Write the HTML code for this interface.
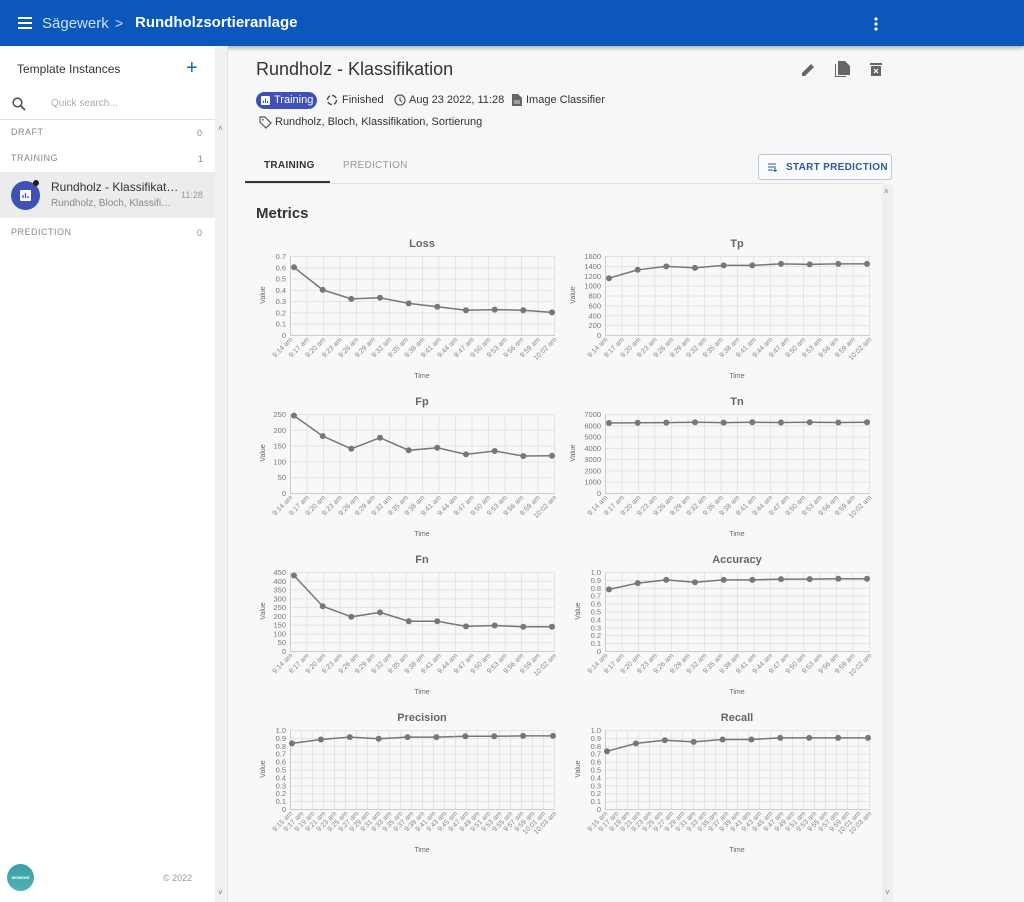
<!DOCTYPE html>
<html><head><meta charset="utf-8"><style>
*{box-sizing:border-box;margin:0;padding:0}
body{width:1024px;height:902px;overflow:hidden;font-family:"Liberation Sans",sans-serif;background:#f7f7f7;position:relative;color:#333}
.abs{position:absolute}
.top{left:0;top:0;width:1024px;height:46px;background:#0b57bb;box-shadow:0 2px 4px rgba(0,0,0,.3)}
.side{left:0;top:46px;width:215px;height:856px;background:#fff}
.sbar{left:215px;top:46px;width:13px;height:856px;background:#f1f1f1;border-right:1px solid #e3e3e3}
.sec{font-size:9px;letter-spacing:.5px;color:#888}
.cnt{font-size:9px;color:#888}
svg text{font-family:"Liberation Sans",sans-serif}
.ch{position:absolute;width:310px;height:150px}
.ch .yl text{font-size:7.5px;fill:#777;text-anchor:end}
.ch .xl text{font-size:7px;fill:#888;text-anchor:end}
.ch .t{font-size:11px;font-weight:bold;fill:#666;text-anchor:middle}
.ch .ax{font-size:7px;fill:#666;text-anchor:middle}
</style></head><body>
<div class="abs top">
 <svg class="abs" style="left:18px;top:17px" width="14" height="12"><path d="M0 1H14M0 6H14M0 11H14" stroke="#fff" stroke-width="2"/></svg>
 <div class="abs" style="left:42px;top:15px;font-size:15px;color:#cfe0f7">Sägewerk</div>
 <div class="abs" style="left:115px;top:15px;font-size:14px;color:#cfe0f7">&gt;</div>
 <div class="abs" style="left:135px;top:14px;font-size:15px;color:#fff;font-weight:bold">Rundholzsortieranlage</div>
 <svg class="abs" style="left:874px;top:17px" width="4" height="14"><circle cx="2" cy="2" r="1.6" fill="#fff"/><circle cx="2" cy="7" r="1.6" fill="#fff"/><circle cx="2" cy="12" r="1.6" fill="#fff"/></svg>
</div>
<div class="abs side">
 <div class="abs" style="left:17px;top:16px;font-size:12px;color:#333">Template Instances</div>
 <div class="abs" style="left:186px;top:11px;font-size:20px;color:#1565c0">+</div>
 <svg class="abs" style="left:12px;top:51px" width="14" height="14"><circle cx="5.5" cy="5.5" r="4.3" fill="none" stroke="#555" stroke-width="1.6"/><path d="M8.7 8.7L13 13" stroke="#555" stroke-width="1.8"/></svg>
 <div class="abs" style="left:51px;top:52px;font-size:10px;color:#aaa">Quick search...</div>
 <div class="abs" style="left:0;top:73px;width:215px;height:1px;background:#e0e0e0"></div>
 <div class="abs sec" style="left:11px;top:81px">DRAFT</div><div class="abs cnt" style="left:197px;top:82px">0</div>
 <div class="abs sec" style="left:11px;top:107px">TRAINING</div><div class="abs cnt" style="left:198px;top:108px">1</div>
 <div class="abs" style="left:0;top:126px;width:215px;height:46px;background:#ececec"></div>
 <div class="abs" style="left:11px;top:135px;width:29px;height:29px;border-radius:50%;background:#3f51b5"></div>
 <div class="abs" style="left:33px;top:134px;width:6px;height:6px;border-radius:50%;background:#222"></div>
 <svg class="abs" style="left:20px;top:144px" width="11" height="11"><rect width="11" height="11" rx="1" fill="#fff"/><path d="M3 8V5M5.5 8V3M8 8V6" stroke="#3f51b5" stroke-width="1.3"/></svg>
 <div class="abs" style="left:51px;top:134px;font-size:12px;color:#333">Rundholz - Klassifikat…</div>
 <div class="abs" style="left:51px;top:152px;font-size:10px;color:#888">Rundholz, Bloch, Klassifi…</div>
 <div class="abs" style="left:181px;top:144px;font-size:9px;color:#999">11:28</div>
 <div class="abs sec" style="left:11px;top:181px">PREDICTION</div><div class="abs cnt" style="left:197px;top:182px">0</div>
 <div class="abs" style="left:7px;top:818px;width:27px;height:27px;border-radius:50%;background:linear-gradient(#3a9ea5,#4fb1b2);color:#fff;font-size:4px;text-align:center;line-height:27px;font-weight:bold">SIEMENS</div>
 <div class="abs" style="left:163px;top:827px;font-size:9px;color:#999">© 2022</div>
</div>
<div class="abs sbar"><div class="abs" style="left:3px;top:78px;font-size:8px;color:#777">˄</div><div class="abs" style="left:3px;top:842px;font-size:8px;color:#777">˅</div></div>

<div class="abs" style="left:256px;top:59px;font-size:18px;color:#333">Rundholz - Klassifikation</div>
<svg class="abs" style="left:801px;top:62px" width="15" height="15"><path d="M1 14V11L10 2L13 5L4 14Z" fill="#666"/></svg>
<svg class="abs" style="left:835px;top:61px" width="16" height="17"><path d="M1 3V15H11V16H0V3Z" fill="#666"/><path d="M3 0H10L15 5V14H3Z" fill="#666"/></svg>
<svg class="abs" style="left:870px;top:62px" width="12" height="14"><rect x="0" y="1" width="12" height="2" fill="#666"/><rect x="1" y="4" width="10" height="10" fill="#666"/><path d="M4 7L8 11M8 7L4 11" stroke="#fff" stroke-width="1.2"/></svg>

<div class="abs" style="left:256px;top:92px;width:61px;height:17px;border-radius:9px;background:#3f51b5"></div>
<svg class="abs" style="left:261px;top:96px" width="9" height="9"><rect width="9" height="9" rx="1" fill="#fff"/><path d="M2.5 7V4.5M4.5 7V2.5M6.5 7V5" stroke="#3f51b5" stroke-width="1.1"/></svg>
<div class="abs" style="left:274px;top:94px;font-size:11px;color:#fff">Training</div>
<svg class="abs" style="left:326px;top:94px" width="12" height="12"><circle cx="6" cy="6" r="4.5" fill="none" stroke="#555" stroke-width="1.5" stroke-dasharray="5 2"/></svg>
<div class="abs" style="left:342px;top:94px;font-size:11px;color:#333">Finished</div>
<svg class="abs" style="left:394px;top:94px" width="12" height="12"><circle cx="6" cy="6" r="5" fill="none" stroke="#555" stroke-width="1.2"/><path d="M6 3V6.5L8 8" stroke="#555" stroke-width="1.1" fill="none"/></svg>
<div class="abs" style="left:409px;top:94px;font-size:11px;color:#333">Aug 23 2022, 11:28</div>
<svg class="abs" style="left:512px;top:94px" width="10" height="12"><path d="M0 0H6L10 4V12H0Z" fill="#666"/><path d="M2 7H8M2 9H8" stroke="#fff" stroke-width=".8"/></svg>
<div class="abs" style="left:526px;top:94px;font-size:11px;color:#333">Image Classifier</div>
<svg class="abs" style="left:259px;top:116px" width="13" height="13"><path d="M1 1H6L12 7L7 12L1 6Z" fill="none" stroke="#555" stroke-width="1.2"/><circle cx="3.8" cy="3.8" r=".9" fill="#555"/></svg>
<div class="abs" style="left:275px;top:116px;font-size:11px;color:#333">Rundholz, Bloch, Klassifikation, Sortierung</div>

<div class="abs" style="left:264px;top:160px;font-size:10px;font-weight:bold;color:#333;letter-spacing:.3px">TRAINING</div>
<div class="abs" style="left:343px;top:160px;font-size:10px;color:#999;letter-spacing:.3px">PREDICTION</div>
<div class="abs" style="left:245px;top:183px;width:637px;height:1px;background:#e0e0e0"></div>
<div class="abs" style="left:245px;top:181px;width:85px;height:2px;background:#333"></div>
<div class="abs" style="left:758px;top:154px;width:134px;height:26px;border:1px solid #b8c8dc;border-radius:3px;background:#f9fbfd"></div>
<svg class="abs" style="left:768px;top:163px" width="10" height="9"><path d="M0 1H8M0 4H8M0 7H5M7 5V9M5.5 7.5H9" stroke="#1e5aa8" stroke-width="1.1"/></svg>
<div class="abs" style="left:786px;top:162px;font-size:10px;font-weight:bold;color:#2b5c99;letter-spacing:.3px">START PREDICTION</div>

<div class="abs" style="left:245px;top:185px;width:637px;height:717px;background:#f8f8f8"></div>
<div class="abs" style="left:882px;top:185px;width:11px;height:717px;background:#efefef"><div class="abs" style="left:2px;top:2px;font-size:8px;color:#777">˄</div></div>
<div class="abs" style="left:256px;top:205px;font-size:15px;font-weight:bold;color:#333">Metrics</div>

<svg width="0" height="0" style="position:absolute"><defs>
<pattern id="v17" x="35" y="0" width="16.5" height="10" patternUnits="userSpaceOnUse"><path d="M0.5 0V10" stroke="#e4e4e4"/></pattern>
<pattern id="v25" x="35" y="0" width="11" height="10" patternUnits="userSpaceOnUse"><path d="M0.5 0V10" stroke="#e4e4e4"/></pattern>
<pattern id="h5" x="0" y="23" width="10" height="15.8" patternUnits="userSpaceOnUse"><path d="M0 0.5H10" stroke="#e4e4e4"/></pattern>
<pattern id="h7" x="0" y="23" width="10" height="11.286" patternUnits="userSpaceOnUse"><path d="M0 0.5H10" stroke="#e4e4e4"/></pattern>
<pattern id="h8" x="0" y="23" width="10" height="9.875" patternUnits="userSpaceOnUse"><path d="M0 0.5H10" stroke="#e4e4e4"/></pattern>
<pattern id="h9" x="0" y="23" width="10" height="8.778" patternUnits="userSpaceOnUse"><path d="M0 0.5H10" stroke="#e4e4e4"/></pattern>
<pattern id="h10" x="0" y="23" width="10" height="7.9" patternUnits="userSpaceOnUse"><path d="M0 0.5H10" stroke="#e4e4e4"/></pattern>
<marker id="dot" markerWidth="8" markerHeight="8" refX="4" refY="4" markerUnits="userSpaceOnUse"><circle cx="4" cy="4" r="3" fill="#777"/></marker>
</defs></svg>

<!-- Loss -->
<svg class="ch" style="left:255px;top:233px"><text class="t" x="167" y="14">Loss</text>
<rect x="35" y="23" width="265" height="80" fill="url(#v17)"/><rect x="35" y="23" width="265" height="80" fill="url(#h7)"/><path d="M35.5 23V102.5H300" stroke="#ccc" fill="none"/>
<g class="yl"><text x="31" y="26">0.7</text><text x="31" y="37.3">0.6</text><text x="31" y="48.6">0.5</text><text x="31" y="59.9">0.4</text><text x="31" y="71.1">0.3</text><text x="31" y="82.4">0.2</text><text x="31" y="93.7">0.1</text><text x="31" y="105">0</text></g>
<g class="xl"><text transform="translate(38,107)rotate(-45)">9:14 am</text><text transform="translate(54.5,107)rotate(-45)">9:17 am</text><text transform="translate(71,107)rotate(-45)">9:20 am</text><text transform="translate(87.5,107)rotate(-45)">9:23 am</text><text transform="translate(104,107)rotate(-45)">9:26 am</text><text transform="translate(120.5,107)rotate(-45)">9:29 am</text><text transform="translate(137,107)rotate(-45)">9:32 am</text><text transform="translate(153.5,107)rotate(-45)">9:35 am</text><text transform="translate(170,107)rotate(-45)">9:38 am</text><text transform="translate(186.5,107)rotate(-45)">9:41 am</text><text transform="translate(203,107)rotate(-45)">9:44 am</text><text transform="translate(219.5,107)rotate(-45)">9:47 am</text><text transform="translate(236,107)rotate(-45)">9:50 am</text><text transform="translate(252.5,107)rotate(-45)">9:53 am</text><text transform="translate(269,107)rotate(-45)">9:56 am</text><text transform="translate(285.5,107)rotate(-45)">9:59 am</text><text transform="translate(302,107)rotate(-45)">10:02 am</text></g>
<text class="ax" transform="translate(10,62)rotate(-90)">Value</text><text class="ax" x="167" y="145">Time</text>
<polyline points="39,34.3 67.7,56.9 96.3,65.9 125,64.8 153.7,70.4 182.3,73.8 211,77.2 239.7,76.6 268.3,77.2 297,79.4" fill="none" stroke="#777" stroke-width="1.5" marker-start="url(#dot)" marker-mid="url(#dot)" marker-end="url(#dot)"/></svg>

<!-- Tp -->
<svg class="ch" style="left:570px;top:233px"><text class="t" x="167" y="14">Tp</text>
<rect x="35" y="23" width="265" height="80" fill="url(#v17)"/><rect x="35" y="23" width="265" height="80" fill="url(#h8)"/><path d="M35.5 23V102.5H300" stroke="#ccc" fill="none"/>
<g class="yl"><text x="31" y="26">1600</text><text x="31" y="35.9">1400</text><text x="31" y="45.8">1200</text><text x="31" y="55.6">1000</text><text x="31" y="65.5">800</text><text x="31" y="75.4">600</text><text x="31" y="85.3">400</text><text x="31" y="95.1">200</text><text x="31" y="105">0</text></g>
<g class="xl"><text transform="translate(38,107)rotate(-45)">9:14 am</text><text transform="translate(54.5,107)rotate(-45)">9:17 am</text><text transform="translate(71,107)rotate(-45)">9:20 am</text><text transform="translate(87.5,107)rotate(-45)">9:23 am</text><text transform="translate(104,107)rotate(-45)">9:26 am</text><text transform="translate(120.5,107)rotate(-45)">9:29 am</text><text transform="translate(137,107)rotate(-45)">9:32 am</text><text transform="translate(153.5,107)rotate(-45)">9:35 am</text><text transform="translate(170,107)rotate(-45)">9:38 am</text><text transform="translate(186.5,107)rotate(-45)">9:41 am</text><text transform="translate(203,107)rotate(-45)">9:44 am</text><text transform="translate(219.5,107)rotate(-45)">9:47 am</text><text transform="translate(236,107)rotate(-45)">9:50 am</text><text transform="translate(252.5,107)rotate(-45)">9:53 am</text><text transform="translate(269,107)rotate(-45)">9:56 am</text><text transform="translate(285.5,107)rotate(-45)">9:59 am</text><text transform="translate(302,107)rotate(-45)">10:02 am</text></g>
<text class="ax" transform="translate(5,62)rotate(-90)">Value</text><text class="ax" x="167" y="145">Time</text>
<polyline points="39,45.2 67.7,36.8 96.3,33.4 125,34.9 153.7,32.4 182.3,32.4 211,30.9 239.7,31.4 268.3,30.9 297,30.9" fill="none" stroke="#777" stroke-width="1.5" marker-start="url(#dot)" marker-mid="url(#dot)" marker-end="url(#dot)"/></svg>

<!-- Fp -->
<svg class="ch" style="left:255px;top:391px"><text class="t" x="167" y="14">Fp</text>
<rect x="35" y="23" width="265" height="80" fill="url(#v17)"/><rect x="35" y="23" width="265" height="80" fill="url(#h5)"/><path d="M35.5 23V102.5H300" stroke="#ccc" fill="none"/>
<g class="yl"><text x="31" y="26">250</text><text x="31" y="41.8">200</text><text x="31" y="57.6">150</text><text x="31" y="73.4">100</text><text x="31" y="89.2">50</text><text x="31" y="105">0</text></g>
<g class="xl"><text transform="translate(38,107)rotate(-45)">9:14 am</text><text transform="translate(54.5,107)rotate(-45)">9:17 am</text><text transform="translate(71,107)rotate(-45)">9:20 am</text><text transform="translate(87.5,107)rotate(-45)">9:23 am</text><text transform="translate(104,107)rotate(-45)">9:26 am</text><text transform="translate(120.5,107)rotate(-45)">9:29 am</text><text transform="translate(137,107)rotate(-45)">9:32 am</text><text transform="translate(153.5,107)rotate(-45)">9:35 am</text><text transform="translate(170,107)rotate(-45)">9:38 am</text><text transform="translate(186.5,107)rotate(-45)">9:41 am</text><text transform="translate(203,107)rotate(-45)">9:44 am</text><text transform="translate(219.5,107)rotate(-45)">9:47 am</text><text transform="translate(236,107)rotate(-45)">9:50 am</text><text transform="translate(252.5,107)rotate(-45)">9:53 am</text><text transform="translate(269,107)rotate(-45)">9:56 am</text><text transform="translate(285.5,107)rotate(-45)">9:59 am</text><text transform="translate(302,107)rotate(-45)">10:02 am</text></g>
<text class="ax" transform="translate(10,62)rotate(-90)">Value</text><text class="ax" x="167" y="145">Time</text>
<polyline points="39,24.6 67.7,45.1 96.3,57.8 125,46.7 153.7,59.3 182.3,56.8 211,63.4 239.7,60 268.3,65 297,64.7" fill="none" stroke="#777" stroke-width="1.5" marker-start="url(#dot)" marker-mid="url(#dot)" marker-end="url(#dot)"/></svg>

<!-- Tn -->
<svg class="ch" style="left:570px;top:391px"><text class="t" x="167" y="14">Tn</text>
<rect x="35" y="23" width="265" height="80" fill="url(#v17)"/><rect x="35" y="23" width="265" height="80" fill="url(#h7)"/><path d="M35.5 23V102.5H300" stroke="#ccc" fill="none"/>
<g class="yl"><text x="31" y="26">7000</text><text x="31" y="37.3">6000</text><text x="31" y="48.6">5000</text><text x="31" y="59.9">4000</text><text x="31" y="71.1">3000</text><text x="31" y="82.4">2000</text><text x="31" y="93.7">1000</text><text x="31" y="105">0</text></g>
<g class="xl"><text transform="translate(38,107)rotate(-45)">9:14 am</text><text transform="translate(54.5,107)rotate(-45)">9:17 am</text><text transform="translate(71,107)rotate(-45)">9:20 am</text><text transform="translate(87.5,107)rotate(-45)">9:23 am</text><text transform="translate(104,107)rotate(-45)">9:26 am</text><text transform="translate(120.5,107)rotate(-45)">9:29 am</text><text transform="translate(137,107)rotate(-45)">9:32 am</text><text transform="translate(153.5,107)rotate(-45)">9:35 am</text><text transform="translate(170,107)rotate(-45)">9:38 am</text><text transform="translate(186.5,107)rotate(-45)">9:41 am</text><text transform="translate(203,107)rotate(-45)">9:44 am</text><text transform="translate(219.5,107)rotate(-45)">9:47 am</text><text transform="translate(236,107)rotate(-45)">9:50 am</text><text transform="translate(252.5,107)rotate(-45)">9:53 am</text><text transform="translate(269,107)rotate(-45)">9:56 am</text><text transform="translate(285.5,107)rotate(-45)">9:59 am</text><text transform="translate(302,107)rotate(-45)">10:02 am</text></g>
<text class="ax" transform="translate(5,62)rotate(-90)">Value</text><text class="ax" x="167" y="145">Time</text>
<polyline points="39,32 67.7,31.8 96.3,31.6 125,31.3 153.7,31.6 182.3,31.3 211,31.5 239.7,31.3 268.3,31.5 297,31.3" fill="none" stroke="#777" stroke-width="1.5" marker-start="url(#dot)" marker-mid="url(#dot)" marker-end="url(#dot)"/></svg>

<!-- Fn -->
<svg class="ch" style="left:255px;top:549px"><text class="t" x="167" y="14">Fn</text>
<rect x="35" y="23" width="265" height="80" fill="url(#v17)"/><rect x="35" y="23" width="265" height="80" fill="url(#h9)"/><path d="M35.5 23V102.5H300" stroke="#ccc" fill="none"/>
<g class="yl"><text x="31" y="26">450</text><text x="31" y="34.8">400</text><text x="31" y="43.6">350</text><text x="31" y="52.3">300</text><text x="31" y="61.1">250</text><text x="31" y="69.9">200</text><text x="31" y="78.7">150</text><text x="31" y="87.4">100</text><text x="31" y="96.2">50</text><text x="31" y="105">0</text></g>
<g class="xl"><text transform="translate(38,107)rotate(-45)">9:14 am</text><text transform="translate(54.5,107)rotate(-45)">9:17 am</text><text transform="translate(71,107)rotate(-45)">9:20 am</text><text transform="translate(87.5,107)rotate(-45)">9:23 am</text><text transform="translate(104,107)rotate(-45)">9:26 am</text><text transform="translate(120.5,107)rotate(-45)">9:29 am</text><text transform="translate(137,107)rotate(-45)">9:32 am</text><text transform="translate(153.5,107)rotate(-45)">9:35 am</text><text transform="translate(170,107)rotate(-45)">9:38 am</text><text transform="translate(186.5,107)rotate(-45)">9:41 am</text><text transform="translate(203,107)rotate(-45)">9:44 am</text><text transform="translate(219.5,107)rotate(-45)">9:47 am</text><text transform="translate(236,107)rotate(-45)">9:50 am</text><text transform="translate(252.5,107)rotate(-45)">9:53 am</text><text transform="translate(269,107)rotate(-45)">9:56 am</text><text transform="translate(285.5,107)rotate(-45)">9:59 am</text><text transform="translate(302,107)rotate(-45)">10:02 am</text></g>
<text class="ax" transform="translate(10,62)rotate(-90)">Value</text><text class="ax" x="167" y="145">Time</text>
<polyline points="39,26.5 67.7,57.2 96.3,67.8 125,63.4 153.7,72.2 182.3,72.2 211,77.4 239.7,76.5 268.3,77.8 297,77.8" fill="none" stroke="#777" stroke-width="1.5" marker-start="url(#dot)" marker-mid="url(#dot)" marker-end="url(#dot)"/></svg>

<!-- Accuracy -->
<svg class="ch" style="left:570px;top:549px"><text class="t" x="167" y="14">Accuracy</text>
<rect x="35" y="23" width="265" height="80" fill="url(#v17)"/><rect x="35" y="23" width="265" height="80" fill="url(#h10)"/><path d="M35.5 23V102.5H300" stroke="#ccc" fill="none"/>
<g class="yl"><text x="31" y="26">1.0</text><text x="31" y="33.9">0.9</text><text x="31" y="41.8">0.8</text><text x="31" y="49.7">0.7</text><text x="31" y="57.6">0.6</text><text x="31" y="65.5">0.5</text><text x="31" y="73.4">0.4</text><text x="31" y="81.3">0.3</text><text x="31" y="89.2">0.2</text><text x="31" y="97.1">0.1</text><text x="31" y="105">0</text></g>
<g class="xl"><text transform="translate(38,107)rotate(-45)">9:14 am</text><text transform="translate(54.5,107)rotate(-45)">9:17 am</text><text transform="translate(71,107)rotate(-45)">9:20 am</text><text transform="translate(87.5,107)rotate(-45)">9:23 am</text><text transform="translate(104,107)rotate(-45)">9:26 am</text><text transform="translate(120.5,107)rotate(-45)">9:29 am</text><text transform="translate(137,107)rotate(-45)">9:32 am</text><text transform="translate(153.5,107)rotate(-45)">9:35 am</text><text transform="translate(170,107)rotate(-45)">9:38 am</text><text transform="translate(186.5,107)rotate(-45)">9:41 am</text><text transform="translate(203,107)rotate(-45)">9:44 am</text><text transform="translate(219.5,107)rotate(-45)">9:47 am</text><text transform="translate(236,107)rotate(-45)">9:50 am</text><text transform="translate(252.5,107)rotate(-45)">9:53 am</text><text transform="translate(269,107)rotate(-45)">9:56 am</text><text transform="translate(285.5,107)rotate(-45)">9:59 am</text><text transform="translate(302,107)rotate(-45)">10:02 am</text></g>
<text class="ax" transform="translate(10,62)rotate(-90)">Value</text><text class="ax" x="167" y="145">Time</text>
<polyline points="39,40.4 67.7,34.1 96.3,30.9 125,33.3 153.7,30.9 182.3,30.9 211,30.1 239.7,30.1 268.3,29.7 297,29.7" fill="none" stroke="#777" stroke-width="1.5" marker-start="url(#dot)" marker-mid="url(#dot)" marker-end="url(#dot)"/></svg>

<!-- Precision -->
<svg class="ch" style="left:255px;top:707px"><text class="t" x="167" y="14">Precision</text>
<rect x="35" y="23" width="265" height="80" fill="url(#v25)"/><rect x="35" y="23" width="265" height="80" fill="url(#h10)"/><path d="M35.5 23V102.5H300" stroke="#ccc" fill="none"/>
<g class="yl"><text x="31" y="26">1.0</text><text x="31" y="33.9">0.9</text><text x="31" y="41.8">0.8</text><text x="31" y="49.7">0.7</text><text x="31" y="57.6">0.6</text><text x="31" y="65.5">0.5</text><text x="31" y="73.4">0.4</text><text x="31" y="81.3">0.3</text><text x="31" y="89.2">0.2</text><text x="31" y="97.1">0.1</text><text x="31" y="105">0</text></g>
<g class="xl"><text transform="translate(38,107)rotate(-45)">9:15 am</text><text transform="translate(49,107)rotate(-45)">9:17 am</text><text transform="translate(60,107)rotate(-45)">9:19 am</text><text transform="translate(71,107)rotate(-45)">9:21 am</text><text transform="translate(82,107)rotate(-45)">9:23 am</text><text transform="translate(93,107)rotate(-45)">9:25 am</text><text transform="translate(104,107)rotate(-45)">9:27 am</text><text transform="translate(115,107)rotate(-45)">9:29 am</text><text transform="translate(126,107)rotate(-45)">9:31 am</text><text transform="translate(137,107)rotate(-45)">9:33 am</text><text transform="translate(148,107)rotate(-45)">9:35 am</text><text transform="translate(159,107)rotate(-45)">9:37 am</text><text transform="translate(170,107)rotate(-45)">9:39 am</text><text transform="translate(181,107)rotate(-45)">9:41 am</text><text transform="translate(192,107)rotate(-45)">9:43 am</text><text transform="translate(203,107)rotate(-45)">9:45 am</text><text transform="translate(214,107)rotate(-45)">9:47 am</text><text transform="translate(225,107)rotate(-45)">9:49 am</text><text transform="translate(236,107)rotate(-45)">9:51 am</text><text transform="translate(247,107)rotate(-45)">9:53 am</text><text transform="translate(258,107)rotate(-45)">9:55 am</text><text transform="translate(269,107)rotate(-45)">9:57 am</text><text transform="translate(280,107)rotate(-45)">9:59 am</text><text transform="translate(291,107)rotate(-45)">10:01 am</text><text transform="translate(302,107)rotate(-45)">10:03 am</text></g>
<text class="ax" transform="translate(10,62)rotate(-90)">Value</text><text class="ax" x="167" y="145">Time</text>
<polyline points="37,36.4 65.9,32.5 94.8,30.1 123.7,31.7 152.6,30.1 181.4,30.1 210.3,29.3 239.2,29.3 268.1,28.9 298,28.9" fill="none" stroke="#777" stroke-width="1.5" marker-start="url(#dot)" marker-mid="url(#dot)" marker-end="url(#dot)"/></svg>

<!-- Recall -->
<svg class="ch" style="left:570px;top:707px"><text class="t" x="167" y="14">Recall</text>
<rect x="35" y="23" width="265" height="80" fill="url(#v25)"/><rect x="35" y="23" width="265" height="80" fill="url(#h10)"/><path d="M35.5 23V102.5H300" stroke="#ccc" fill="none"/>
<g class="yl"><text x="31" y="26">1.0</text><text x="31" y="33.9">0.9</text><text x="31" y="41.8">0.8</text><text x="31" y="49.7">0.7</text><text x="31" y="57.6">0.6</text><text x="31" y="65.5">0.5</text><text x="31" y="73.4">0.4</text><text x="31" y="81.3">0.3</text><text x="31" y="89.2">0.2</text><text x="31" y="97.1">0.1</text><text x="31" y="105">0</text></g>
<g class="xl"><text transform="translate(38,107)rotate(-45)">9:15 am</text><text transform="translate(49,107)rotate(-45)">9:17 am</text><text transform="translate(60,107)rotate(-45)">9:19 am</text><text transform="translate(71,107)rotate(-45)">9:21 am</text><text transform="translate(82,107)rotate(-45)">9:23 am</text><text transform="translate(93,107)rotate(-45)">9:25 am</text><text transform="translate(104,107)rotate(-45)">9:27 am</text><text transform="translate(115,107)rotate(-45)">9:29 am</text><text transform="translate(126,107)rotate(-45)">9:31 am</text><text transform="translate(137,107)rotate(-45)">9:33 am</text><text transform="translate(148,107)rotate(-45)">9:35 am</text><text transform="translate(159,107)rotate(-45)">9:37 am</text><text transform="translate(170,107)rotate(-45)">9:39 am</text><text transform="translate(181,107)rotate(-45)">9:41 am</text><text transform="translate(192,107)rotate(-45)">9:43 am</text><text transform="translate(203,107)rotate(-45)">9:45 am</text><text transform="translate(214,107)rotate(-45)">9:47 am</text><text transform="translate(225,107)rotate(-45)">9:49 am</text><text transform="translate(236,107)rotate(-45)">9:51 am</text><text transform="translate(247,107)rotate(-45)">9:53 am</text><text transform="translate(258,107)rotate(-45)">9:55 am</text><text transform="translate(269,107)rotate(-45)">9:57 am</text><text transform="translate(280,107)rotate(-45)">9:59 am</text><text transform="translate(291,107)rotate(-45)">10:01 am</text><text transform="translate(302,107)rotate(-45)">10:03 am</text></g>
<text class="ax" transform="translate(10,62)rotate(-90)">Value</text><text class="ax" x="167" y="145">Time</text>
<polyline points="37,44.3 65.9,36.4 94.8,33.3 123.7,34.9 152.6,32.5 181.4,32.5 210.3,30.9 239.2,30.9 268.1,30.9 298,30.9" fill="none" stroke="#777" stroke-width="1.5" marker-start="url(#dot)" marker-mid="url(#dot)" marker-end="url(#dot)"/></svg>
<div class="abs" style="left:885px;top:888px;font-size:8px;color:#777">˅</div>
</body></html>
